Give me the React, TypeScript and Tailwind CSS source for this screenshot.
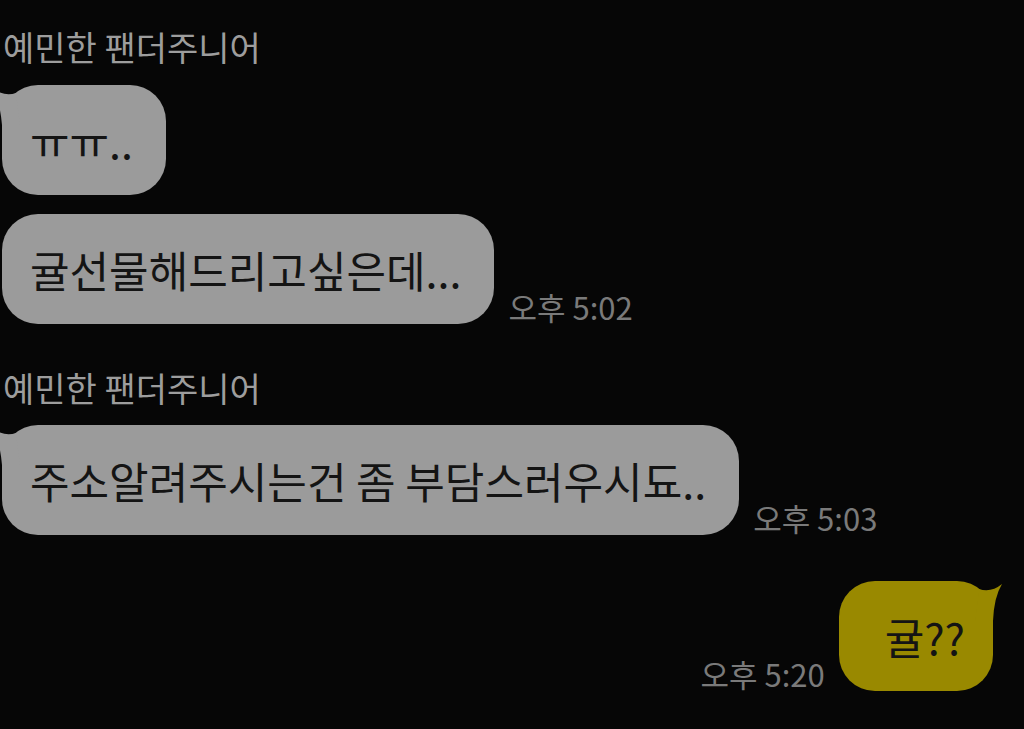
import type { ReactNode } from 'react';

const FONT = "font-['Noto_Sans_CJK_KR','Noto_Sans',sans-serif]";

// Small curved tail on the first bubble of an incoming group
function LeftTail() {
  return (
    <svg
      className="absolute left-[-12px] top-0 h-[40px] w-[30px]"
      viewBox="0 0 30 40"
    >
      <path d="M26 8 Q14 12 2 3 Q10 16 12 40 L30 40 Z" fill="#9b9b9b" />
    </svg>
  );
}

function RightTail() {
  return (
    <svg
      className="absolute right-[-12px] top-0 h-[40px] w-[30px]"
      viewBox="0 0 30 40"
    >
      <path d="M4 8 Q16 12 27 3 Q19 16 18 40 L0 40 Z" fill="#998900" />
    </svg>
  );
}

function Sender({ name }: { name: string }) {
  return (
    <div className="pl-[3px] text-[34px] leading-[40px] text-[#9d9d9d]">{name}</div>
  );
}

function Time({ label }: { label: string }) {
  return (
    <span className="mb-[-1px] shrink-0 text-[31px] leading-[36px] text-[#7a7a7a]">
      {label}
    </span>
  );
}

function Bubble({
  children,
  tail = false,
  mine = false,
}: {
  children: ReactNode;
  tail?: boolean;
  mine?: boolean;
}) {
  return (
    <div
      className={`relative flex h-[110px] items-center rounded-[36px] text-[43px] leading-none text-[#141414] ${
        mine ? 'bg-[#998900] pl-[46px] pr-[28px]' : 'bg-[#9b9b9b] pl-[28px] pr-[33px]'
      }`}
    >
      {tail && (mine ? <RightTail /> : <LeftTail />)}
      <span className="relative">{children}</span>
    </div>
  );
}

export default function App() {
  return (
    <div className={`min-h-[729px] w-full overflow-hidden bg-[#060606] pt-[27px] ${FONT}`}>
      <Sender name="예민한 팬더주니어" />
      <div className="mt-[18px] flex flex-col items-start gap-[19px] pl-[2px]">
        <Bubble tail>ㅠㅠ..</Bubble>
        <div className="flex items-end gap-[14px]">
          <Bubble>귤선물해드리고싶은데...</Bubble>
          <Time label="오후 5:02" />
        </div>
      </div>

      <div className="mt-[44px]">
        <Sender name="예민한 팬더주니어" />
      </div>
      <div className="mt-[17px] flex items-end gap-[14px] pl-[2px]">
        <Bubble tail>주소알려주시는건 좀 부담스러우시됴..</Bubble>
        <Time label="오후 5:03" />
      </div>

      <div className="mt-[46px] flex items-end justify-end gap-[14px] pr-[31px]">
        <Time label="오후 5:20" />
        <Bubble tail mine>
          귤??
        </Bubble>
      </div>
    </div>
  );
}
